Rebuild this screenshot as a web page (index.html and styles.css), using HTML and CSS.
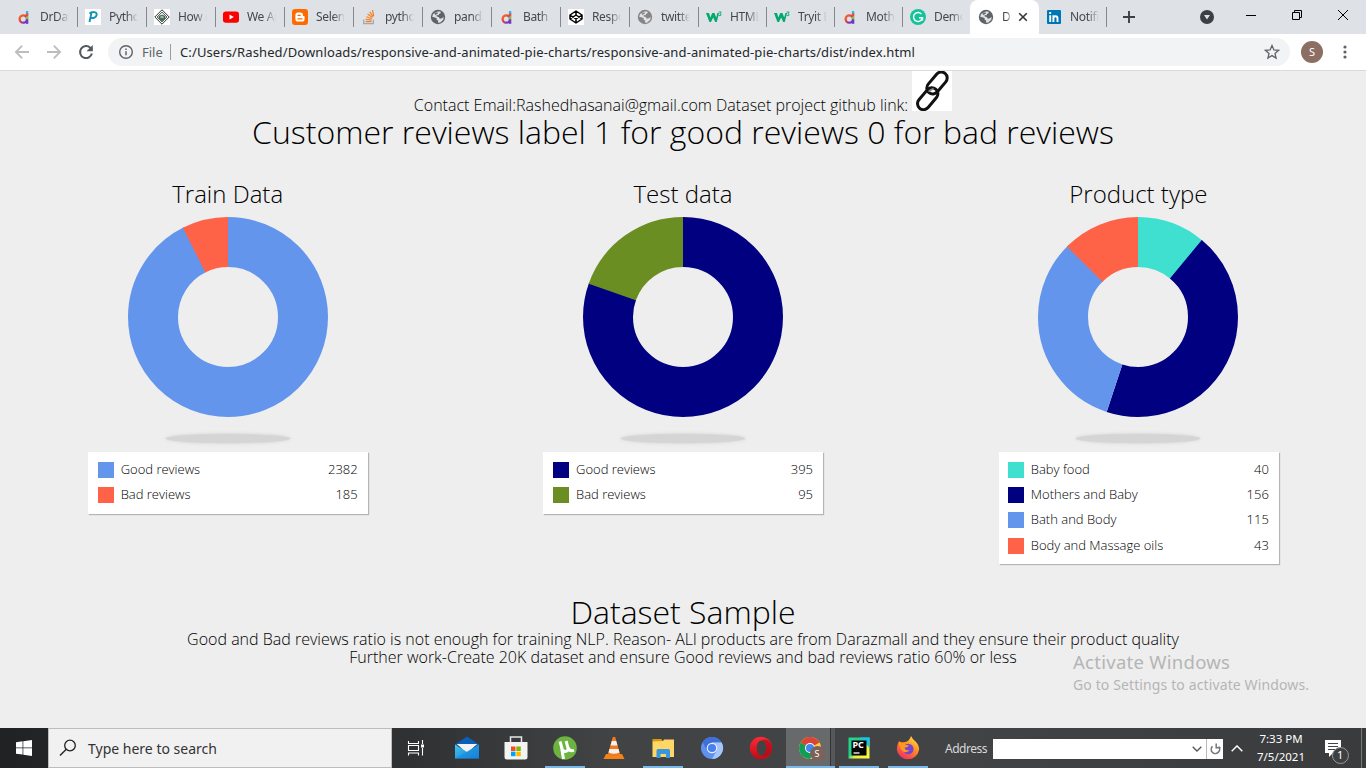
FILE: index.html
```html
<!DOCTYPE html>
<html lang="en">
<head>
<meta charset="utf-8">
<title>Customer reviews</title>
<link rel="stylesheet" href="styles.css">
</head>
<body>
<svg class="defs" width="0" height="0">
  <defs>
    <linearGradient id="ff" x1="0.8" y1="0" x2="0.2" y2="1"><stop offset="0" stop-color="#ffe14a"/><stop offset=".45" stop-color="#ff8a1e"/><stop offset="1" stop-color="#f0256c"/></linearGradient>
    <linearGradient id="op" x1="0" y1="0" x2="0" y2="1"><stop offset="0" stop-color="#ff2a35"/><stop offset="1" stop-color="#c20a16"/></linearGradient>
    <linearGradient id="pc" x1="0" y1="0" x2="1" y2="1"><stop offset="0" stop-color="#21d789"/><stop offset=".45" stop-color="#1fd08a"/><stop offset=".6" stop-color="#e6ee3a"/><stop offset="1" stop-color="#fcf84a"/></linearGradient>
    <linearGradient id="ml" x1="0" y1="0" x2="1" y2="1"><stop offset="0" stop-color="#40c8f4"/><stop offset="1" stop-color="#1578d4"/></linearGradient>
    <linearGradient id="bowl" x1="0" y1="0" x2="1" y2="1"><stop offset="0" stop-color="#f5732b"/><stop offset=".4" stop-color="#e8443c"/><stop offset=".75" stop-color="#8a35b8"/><stop offset="1" stop-color="#4a35c8"/></linearGradient>
    <symbol id="daraz" viewBox="0 0 16 16"><circle cx="7.300" cy="10" r="3.700" fill="none" stroke="url(#bowl)" stroke-width="2.300"/><path fill="#25c0ea" d="M9.900 2h2.400v3.500H9.900z"/><path fill="#f0453a" d="M9.900 4.500h2.400v3H9.900z"/><path fill="#7fc241" d="M9.900 7.500h2.400v3H9.900z"/><path fill="#6a3ac0" d="M9.900 10.500h2.400v4.300H9.900z"/></symbol>
    <symbol id="globe" viewBox="0 0 16 16"><circle cx="8" cy="8" r="7.200" fill="currentColor"/><path d="M7.800 2.600 10.300 2.400 10.800 4.100 9 5 8.600 6.300 6.800 6.100 6.500 7.300 9 8.200 9.800 9.700 12 9.300 13.600 7.800 13.300 10.800 10 13.800 7.800 13.600 8.300 11.800 6.600 10.700 6.700 9.300 4.500 8.300 2.300 8 3 5z" fill="#dee1e6"/><path d="M4.200 4.800 7.300 3.300 8 4.300 5.600 6z" fill="currentColor"/></symbol>
    <symbol id="w3" viewBox="0 0 16 16"><path d="M0 4h3l1.400 4.600L6.200 4h2.300l1.700 4.600L11.400 4h1.700l-2.300 9H9.200L7.200 8.400 5 13H3.400z" fill="#04aa6d"/><path d="M12.600 3h2.600l-1.300 1.500q1.600.3 1.100 1.600-.8 1.100-2.300.3" fill="none" stroke="#04aa6d" stroke-width=".9"/></symbol>
  </defs>
</svg>
<div class="screen">
  <header class="browser">
    <div class="tabs">
      <div class="tab"><svg class="fav"><use href="#daraz"/></svg><span class="label">DrDaw</span></div>
      <div class="tab"><svg class="fav" viewBox="0 0 16 16"><path fill="#fff" d="M0 0h16v16H0z"/><path d="M4.500 13 6.600 3.200M4.500 4.600c2-2.200 7.500-2.200 7.200 1-.3 2.800-3.700 4-5.700 3.200" fill="none" stroke="#1295b8" stroke-width="1.900"/></svg><span class="label">Python</span></div>
      <div class="tab"><svg class="fav" viewBox="0 0 16 16"><path fill="#fff" d="M0 0h16v16H0z"/><path d="M8 .8 15.200 8 8 15.200.8 8z" fill="none" stroke="#333" stroke-width="1"/><path d="M8 3 13 8l-5 5-5-5z" fill="#d5e5dc" stroke="#444" stroke-width=".8"/><path d="M5 7.300q3-2 6 0v2.500H5zM6 10l2 2 2-2" fill="#48715a" stroke="#2e5940" stroke-width=".6"/><path d="M6.500 8h3" stroke="#fff"/></svg><span class="label">How d</span></div>
      <div class="tab"><svg class="fav" viewBox="0 0 16 16"><rect y="2.500" width="16" height="11.300" rx="2.800" fill="#f00"/><path d="M6.500 5.600v5L10.800 8.100z" fill="#fff"/></svg><span class="label">We Ar</span></div>
      <div class="tab"><svg class="fav" viewBox="0 0 16 16"><rect width="16" height="16" rx="3" fill="#ff6a00"/><path d="M6 3.500h2.300A2.700 2.700 0 0 1 11 6.200q0 .9.800.9.800 0 .8.900v2a2.600 2.600 0 0 1-2.600 2.600H6A2.600 2.600 0 0 1 3.400 10V6.100A2.600 2.600 0 0 1 6 3.500z" fill="#fff"/><path d="M6 6.300h2.200M6 9.800h4" stroke="#ff6a00" stroke-width="1.300" stroke-linecap="round"/></svg><span class="label">Selenium</span></div>
      <div class="tab"><svg class="fav" viewBox="0 0 16 16"><path d="M2.700 10.500v4.200h9.600v-4.200" fill="none" stroke="#a5a8ab" stroke-width="1.300"/><path d="M4.500 12.600h6M4.700 10.300l5.900.8M5.300 7.800l5.600 1.900M6.600 5.100l4.900 3.400M8.700 2.900l3.500 4.800M11.500 1l1.200 5.900" stroke="#f48024" stroke-width="1.200"/></svg><span class="label">python</span></div>
      <div class="tab"><svg class="fav dark"><use href="#globe"/></svg><span class="label">panda</span></div>
      <div class="tab"><svg class="fav"><use href="#daraz"/></svg><span class="label">Bath &amp;</span></div>
      <div class="tab"><svg class="fav" viewBox="0 0 16 16"><rect width="16" height="16" rx="1" fill="#fff"/><path d="M8 2 14 6v4l-6 4-6-4V6zM2 6l6 4 6-4M2 10l6-4 6 4M8 2v4M8 10v4" fill="none" stroke="#000" stroke-width="1.500" stroke-linejoin="round"/></svg><span class="label">Respo</span></div>
      <div class="tab"><svg class="fav gray"><use href="#globe"/></svg><span class="label">twitter</span></div>
      <div class="tab narrow"><svg class="fav"><use href="#w3"/></svg><span class="label">HTML</span></div>
      <div class="tab narrow"><svg class="fav"><use href="#w3"/></svg><span class="label">Tryit E</span></div>
      <div class="tab narrow"><svg class="fav"><use href="#daraz"/></svg><span class="label">Mothe</span></div>
      <div class="tab narrow last"><svg class="fav" viewBox="0 0 16 16"><circle cx="8" cy="8" r="8" fill="#15c39a"/><path d="M11.400 5A4.500 4.500 0 1 0 12.500 8.700H9M12.500 8.700v2.800" fill="none" stroke="#fff" stroke-width="1.400"/></svg><span class="label">Demo</span></div>
      <div class="tab narrow active"><svg class="fav dark"><use href="#globe"/></svg><span class="label">Da</span><svg class="close" viewBox="0 0 10 10"><path d="m1.200 1.200 7.600 7.600m0-7.600L1.200 8.800" stroke="#333639" stroke-width="1.600"/></svg></div>
      <div class="tab narrow"><svg class="fav" viewBox="0 0 16 16"><rect x="1" y="1" width="14" height="14" rx="1" fill="#0077b5"/><path d="M4.200 6.300V13M4.200 3v1.900M7.400 6.300V13M7.400 9.500q0-2.300 2.100-2.300 2 0 2 2.300V13" fill="none" stroke="#fff" stroke-width="1.900"/></svg><span class="label">Notific</span></div>
      <svg class="plus" viewBox="0 0 12 12"><path d="M6 0v12M0 6h12" stroke="#3c4043" stroke-width="1.900"/></svg>
      <div class="window">
        <svg width="14" height="14" viewBox="0 0 14 14"><circle cx="7" cy="7" r="7" fill="#3c4043"/><path d="M4 5h6L7 9.500z" fill="#dee1e6"/></svg>
        <svg class="min" width="10" height="10"><path d="M0 5.500h10" stroke="#000"/></svg>
        <svg class="max" width="10" height="10"><path d="M.5 2.500h7v7h-7zM2.500 2V.5h7v7H8" fill="none" stroke="#000"/></svg>
        <svg class="quit" width="10" height="10"><path d="m0 0 10 10m0-10L0 10" stroke="#000"/></svg>
      </div>
    </div>
    <div class="toolbar">
      <svg class="nav" viewBox="0 0 16 16"><path d="M15 8H2.300M8.200 1.700 1.900 8l6.300 6.300" fill="none" stroke="#bbbdbf" stroke-width="1.800"/></svg>
      <svg class="nav" viewBox="0 0 16 16"><path d="M1 8h12.700M7.800 1.700 14.100 8l-6.300 6.300" fill="none" stroke="#bbbdbf" stroke-width="1.800"/></svg>
      <svg class="nav" viewBox="0 0 16 16"><path d="M13.900 9.600A6 6 0 1 1 12.300 3.800L14 5.400" fill="none" stroke="#55585c" stroke-width="2"/><path d="M14.800.900v6.300H8.500z" fill="#55585c"/></svg>
      <div class="omnibox">
        <svg width="16" height="16" viewBox="0 0 16 16"><circle cx="8" cy="8" r="6.300" fill="none" stroke="#5f6368" stroke-width="1.400"/><path d="M8 7.200v4M8 4.500v1.400" stroke="#5f6368" stroke-width="1.500"/></svg>
        <span class="scheme">File</span><span class="bar"></span>
        <span class="url">C:/Users/Rashed/Downloads/responsive-and-animated-pie-charts/responsive-and-animated-pie-charts/dist/index.html</span>
        <svg class="star" width="16" height="16" viewBox="0 0 16 16"><path d="m8 1.500 1.900 4.400 4.700.4-3.600 3.100 1.100 4.700L8 11.600l-4.100 2.500L5 9.400 1.400 6.300l4.700-.4z" fill="none" stroke="#5f6368" stroke-width="1.300"/></svg>
      </div>
      <span class="avatar">S</span>
      <svg class="more" width="4" height="14"><circle cx="2" cy="2" r="1.600"/><circle cx="2" cy="7" r="1.600"/><circle cx="2" cy="12" r="1.600"/></svg>
    </div>
  </header>

  <main class="page">
    <div class="contact"><span class="contact-text">Contact Email:Rashedhasanai@gmail.com Dataset project github link:</span>
      <svg class="chain" viewBox="0 0 40 40"><path fill="#fff" d="M0 0h40v40H0z"/><g fill="none" stroke="#111" stroke-width="3"><rect x="-6" y="-12.500" width="12" height="25" rx="6" transform="translate(25 12) rotate(40)"/><rect x="-6" y="-12.500" width="12" height="25" rx="6" transform="translate(15.700 27.700) rotate(40)"/></g><path d="m16.500 20.500 5-3" stroke="#888" stroke-width="1.500"/></svg>
    </div>
    <h1 class="title">Customer reviews label 1 for good reviews 0 for bad reviews</h1>
    <div class="charts">
      <section class="chart">
        <h2>Train Data</h2>
        <svg class="donut" viewBox="0 0 200 200"><g transform="rotate(-90 100 100)"><circle class="blue" cx="100" cy="100" r="75" pathLength="2567" stroke-dasharray="2382 2567"/><circle class="red" cx="100" cy="100" r="75" pathLength="2567" stroke-dasharray="192 2567" stroke-dashoffset="-2375"/></g></svg>
        <div class="shade"></div>
        <ul class="legend"><li><i class="sw blue"></i>Good reviews<b>2382</b></li><li><i class="sw red"></i>Bad reviews<b>185</b></li></ul>
      </section>
      <section class="chart">
        <h2>Test data</h2>
        <svg class="donut" viewBox="0 0 200 200"><g transform="rotate(-90 100 100)"><circle class="navy" cx="100" cy="100" r="75" pathLength="490" stroke-dasharray="395 490"/><circle class="olive" cx="100" cy="100" r="75" pathLength="490" stroke-dasharray="96 490" stroke-dashoffset="-394"/></g></svg>
        <div class="shade"></div>
        <ul class="legend"><li><i class="sw navy"></i>Good reviews<b>395</b></li><li><i class="sw olive"></i>Bad reviews<b>95</b></li></ul>
      </section>
      <section class="chart">
        <h2>Product type</h2>
        <svg class="donut" viewBox="0 0 200 200"><g transform="rotate(-90 100 100)"><circle class="teal" cx="100" cy="100" r="75" pathLength="354" stroke-dasharray="40 354"/><circle class="navy" cx="100" cy="100" r="75" pathLength="354" stroke-dasharray="156 354" stroke-dashoffset="-39"/><circle class="blue" cx="100" cy="100" r="75" pathLength="354" stroke-dasharray="116 354" stroke-dashoffset="-195"/><circle class="red" cx="100" cy="100" r="75" pathLength="354" stroke-dasharray="44.500 354" stroke-dashoffset="-309.500"/></g></svg>
        <div class="shade"></div>
        <ul class="legend shifted"><li><i class="sw teal"></i>Baby food<b>40</b></li><li><i class="sw navy"></i>Mothers and Baby<b>156</b></li><li><i class="sw blue"></i>Bath and Body<b>115</b></li><li><i class="sw red"></i>Body and Massage oils<b>43</b></li></ul>
      </section>
    </div>
    <h1 class="sample">Dataset Sample</h1>
    <p class="note">Good and Bad reviews ratio is not enough for training NLP. Reason- ALl products are from Darazmall and they ensure their product quality</p>
    <p class="note">Further work-Create 20K dataset and ensure Good reviews and bad reviews ratio 60% or less</p>
    <div class="activate"><div class="big">Activate Windows</div><div class="small">Go to Settings to activate Windows.</div></div>
  </main>

  <footer class="taskbar">
    <div class="start"><svg width="16" height="16" viewBox="0 0 16 16"><path d="M0 2.200 6.600 1.300v6.200H0zM7.300 1.200 16 0v7.500H7.300zM0 8.300h6.600v6.300L0 13.700zM7.300 8.300H16V16l-8.700-1.200z" fill="#fff"/></svg></div>
    <div class="search"><svg width="18" height="18" viewBox="0 0 18 18"><circle cx="11" cy="6.500" r="5.300" fill="none" stroke="#222" stroke-width="1.300"/><path d="M7.300 10.300 1 16.600" stroke="#222" stroke-width="1.400"/></svg><span>Type here to search</span></div>
    <div class="apps">
      <div class="app view"><svg width="18" height="16" viewBox="0 0 18 16"><path d="M1.500 1v2.500h10V1M1.500 15.500V13h10v2.500M1.500 5.500h10v5h-10zM15.500 0v4M15.500 8v7.500" fill="none" stroke="#fff" stroke-width="1.100"/><path fill="#fff" d="M14 4.500h3v3h-3z"/></svg></div>
      <div class="app"><svg viewBox="0 0 24 24"><path d="M0 8.500 12 .5l12 8V10H0z" fill="#0c5fb8"/><path d="M2 8h20L12 17.500z" fill="#f3f3f3"/><path d="M0 8.500 12 16l12-7.500v14H0z" fill="url(#ml)"/><path d="M2 8h20L12 15z" fill="#f3f3f3"/><path d="M0 22.500 24 8.500v14z" fill="#1688de" opacity=".55"/></svg></div>
      <div class="app"><svg viewBox="0 0 24 24"><path d="M6.500 7V1h11v6" fill="none" stroke="#e8e8e8" stroke-width="1.500"/><path fill="#f3f3f3" d="M.5 6h23v15q0 2.500-2.500 2.500H3Q.5 23.500.5 21z"/><path fill="#f25022" d="M7 10.500h4.500V15H7z"/><path fill="#7fba00" d="M12.300 10.500h4.500V15h-4.500z"/><path fill="#00a4ef" d="M7 15.700h4.500v4.500H7z"/><path fill="#ffb900" d="M12.300 15.700h4.500v4.500h-4.500z"/></svg></div>
      <div class="app run"><svg viewBox="0 0 24 24"><circle cx="12" cy="12" r="11.800" fill="#6cb33f"/><path d="M7 5.500 9.200 13q1 3 3.700 2.400 2.700-.8 2-3.600L13.100 5M14.900 11.500q1.300 4.200 6.100 2.900M8.200 9.500 10.500 23" fill="none" stroke="#fff" stroke-width="3"/></svg></div>
      <div class="app"><svg viewBox="0 0 24 24"><path d="M4 18h16l2.500 5h-21z" fill="#f58216"/><path d="M10.800 1h2.400l5 17.500q-6 3-12.400 0z" fill="#f4791c"/><path d="M9.800 5h4.400l1.300 4.400h-7zM7.500 13h9l1 3.500q-5.500 2.500-11 0z" fill="#f2f2f2"/></svg></div>
      <div class="app run"><svg viewBox="0 0 24 24"><path d="M1.500 3h9l1.500 3H1.500z" fill="#d99a10"/><path d="M1.500 5.500 12 5l1-1.500h10V21H1.500z" fill="#ffd766"/><path d="M5.500 22v-7.500q0-1.500 1.500-1.500h10.500q1.500 0 1.500 1.500V22h-4v-4H9.500v4z" fill="#3a96dd"/></svg></div>
      <div class="app"><svg viewBox="0 0 24 24"><circle cx="12" cy="12" r="11" fill="#5f92f0"/><path d="M12 6.500h9.600A11 11 0 0 0 2.600 6.300L7 14z" fill="#3f6fd8"/><path d="M12 23a11 11 0 0 0 9.600-16.500H12L17 14z" fill="#a6c5fa"/><circle cx="12" cy="12" r="5.300" fill="#e7effe"/><circle cx="12" cy="12" r="4.100" fill="#4a80ea"/></svg></div>
      <div class="app"><svg viewBox="0 0 24 24"><path d="M12 .8a11.200 11.200 0 1 0 0 22.400A11.200 11.200 0 1 0 12 .8zM12.500 4.500c3 0 4.700 3.300 4.700 7.500s-1.700 7.500-4.700 7.500S7.800 16.200 7.800 12s1.700-7.500 4.700-7.500z" fill="url(#op)" fill-rule="evenodd"/><path d="M12.500 4.500c3-2.500 10.500-.2 10.700 7.500-.2 7.700-7.700 10-10.700 7.500 3 0 4.700-3.300 4.700-7.500s-1.700-7.500-4.700-7.500z" fill="#a70c14" opacity=".65"/></svg></div>
      <div class="app run chrome"><svg viewBox="0 0 24 24"><circle cx="12" cy="12" r="11" fill="#ffcd40"/><path d="M12 12 2.500 6.500a11 11 0 0 1 19 0z" fill="#db4437"/><path d="M12 12 2.500 6.500A11 11 0 0 0 12 23l4-7z" fill="#0f9d58"/><circle cx="12" cy="12" r="5" fill="#fff"/><circle cx="12" cy="12" r="4" fill="#4285f4"/></svg><span class="badge">S</span></div>
      <div class="app run"><svg viewBox="0 0 24 24"><path fill="url(#pc)" d="M1.500 1.500h21v21h-21z"/><path fill="#16c4f0" d="M13 1.500h9.500V12z"/><path fill="#050505" d="M4.500 4.500h15v15h-15z"/><path d="M6.500 17h6" stroke="#fff" stroke-width="1.300"/></svg><span class="pc">PC</span></div>
      <div class="app run"><svg viewBox="0 0 24 24"><path d="M3 5q1 1.300 3 1.500 1.500-.7 3.500-.5Q13.500 5 15 0q1.500 3 4 5 4.500 4 4 9a11.200 11 0 0 1-22.200-.5Q.8 9 3 5z" fill="url(#ff)"/><circle cx="12.300" cy="13" r="5.300" fill="#7545cf"/><path d="M3 6q4 0 7 3l3 .5q-1 2.500-4.500 2 1 3.500 5 2.700-3 3.500-7 .8-3.500-3-3.500-9z" fill="#ff9820"/></svg></div>
    </div>
    <span class="address">Address</span>
    <div class="field"><svg width="10" height="6"><path d="m.7.700 4.300 4.300L9.300.7" fill="none" stroke="#555" stroke-width="1.300"/></svg><span class="go"><svg width="11" height="12" viewBox="0 0 11 12"><path d="M2.500 3.300A4.200 4.200 0 1 0 8.600 3.600" fill="none" stroke="#777" stroke-width="1.600"/><path d="M6.200.6v4.200H10.500" fill="none" stroke="#777" stroke-width="1.500"/></svg></span></div>
    <svg class="up" width="12" height="7"><path d="m.7 6.200 5.300-5.300 5.300 5.300" fill="none" stroke="#fff" stroke-width="1.400"/></svg>
    <div class="clock"><span>7:33 PM</span><span>7/5/2021</span></div>
    <div class="notify"><svg width="24" height="24" viewBox="0 0 24 24"><path d="M0 0h16v13H8l-4 4v-4H0z" fill="#fff"/><path d="M3 3.500h10M3 6.500h10M3 9.500h7" stroke="#444"/><circle cx="15.500" cy="15.500" r="8" fill="#3d3f41" stroke="#9a9a9a"/></svg><span>1</span></div>
    <div class="edge"></div>
  </footer>
</div>
</body>
</html>
```
FILE: styles.css
```css
* { box-sizing: border-box; }
body { margin: 0; overflow: hidden; font-family: "Open Sans", sans-serif; }
.defs { position: absolute; }
.screen { width: 1366px; height: 768px; display: flex; flex-direction: column; background: #eee; }

.browser { height: 71px; border-bottom: 1px solid #d8dadd; background: #fff; font-family: "Noto Sans", sans-serif; }
.tabs { height: 34px; background: #dee1e6; display: flex; align-items: center; padding-left: 9px; }
.tab { width: 69px; height: 34px; flex: none; display: flex; align-items: center; padding-left: 7px; background: linear-gradient(#85888c, #85888c) right 7px / 1px 20px no-repeat; }
.tab.narrow { width: 68px; }
.tab.last { background: none; }
.tab.active { width: 69px; margin-left: -1px; padding-left: 8px; background: #fff; border-radius: 8px 8px 0 0; }
.fav { width: 16px; height: 16px; flex: none; }
.fav.dark { color: #5f6368; }
.fav.gray { color: #858585; }
.label { width: 29px; margin-left: 8px; overflow: hidden; white-space: nowrap; font-size: 12px; line-height: 18px; letter-spacing: -.35px; color: #45484c; -webkit-mask-image: linear-gradient(90deg, #000 60%, transparent); mask-image: linear-gradient(90deg, #000 60%, transparent); }
.active .label { width: 9px; }
.close { width: 10px; height: 10px; margin-left: 7px; }
.plus { width: 12px; height: 12px; margin-left: 16px; }
.window { flex: 1; display: flex; align-items: center; margin-left: 65px; }
.min { margin: -5px 0 0 32px; }
.max { margin: -5px 0 0 36px; }
.quit { margin: -5px 0 0 36px; }
.toolbar { height: 36px; display: flex; align-items: center; padding-left: 14px; }
.nav { width: 16px; height: 16px; margin-right: 16px; }
.omnibox { width: 1182px; height: 28px; margin-left: -2px; border-radius: 14px; background: #f1f3f4; display: flex; align-items: center; padding: 0 10px; font-size: 13px; white-space: nowrap; }
.scheme { margin-left: 8px; color: #5f6368; width: 21px; }
.bar { width: 1px; height: 16px; background: #9a9da1; margin: 0 9px 0 7px; }
.url { color: #25272b; letter-spacing: .115px; }
.star { margin-left: auto; }
.avatar { width: 22px; height: 22px; margin-left: 11px; border-radius: 50%; background: #8d6e63; color: #fff; font-size: 11px; line-height: 22px; text-align: center; }
.more { margin-left: 20px; fill: #5f6368; }

.page { height: 657px; position: relative; color: #000; font-weight: 300; }
.contact { height: 40px; display: flex; justify-content: center; align-items: flex-end; font-size: 16px; line-height: 18px; }
.contact-text { position: relative; top: 3px; }
.chain { width: 40px; height: 40px; margin-left: 4px; }
.page h1, .page h2 { margin: 0; font-weight: 300; text-align: center; }
.page h1 { font-size: 32px; line-height: 42px; height: 44px; }
.charts { height: 436px; display: grid; grid-template-columns: repeat(3, 1fr); padding-top: 23px; }
.chart { display: flex; flex-direction: column; align-items: center; }
.page h2 { font-size: 24px; line-height: 32px; height: 39px; }
.donut { width: 200px; height: 200px; flex: none; }
.donut circle { fill: none; stroke-width: 50; }
.blue { stroke: #6495ed; background: #6495ed; }
.red { stroke: #ff6347; background: #ff6347; }
.navy { stroke: #000080; background: #000080; }
.olive { stroke: #6b8e23; background: #6b8e23; }
.teal { stroke: #40e0d0; background: #40e0d0; }
.shade { width: 124px; height: 9px; flex: none; margin: 17px 0 9px; border-radius: 50%; background: #d5d5d5; box-shadow: 0 0 3px 1px #d9d9d9; }
.legend { width: 280px; margin: 0; padding: 4px 10px 7px; list-style: none; background: #fff; box-shadow: 1px 1px 1px #b4b4b4; font-size: 13px; }
.legend.shifted { padding-left: 9px; margin-left: 1px; }
.legend li { height: 25.3px; display: flex; align-items: center; }
.legend b { margin-left: auto; font-weight: 300; }
.sw { width: 16px; height: 16px; margin: 2px 7px 0 0; }
.page .sample { height: 39px; }
.note { margin: 0; height: 18px; line-height: 18px; font-size: 16px; text-align: center; white-space: nowrap; }
.activate { position: absolute; left: 1073px; top: 578px; color: #b5b5b5; font-family: "Noto Sans", sans-serif; font-weight: 400; white-space: nowrap; }
.big { font-size: 18.5px; line-height: 26px; letter-spacing: .27px; }
.small { font-size: 14px; line-height: 20px; letter-spacing: .12px; }

.taskbar { height: 40px; display: flex; align-items: center; background: linear-gradient(90deg, #202224, #2f3132 30%, #414345 45%, #414345 70%, #393b3d); color: #fff; font-family: "Noto Sans", sans-serif; }
.start { width: 48px; display: flex; justify-content: center; }
.search { width: 344px; height: 40px; display: flex; align-items: center; gap: 11px; padding-left: 10px; background: #f1f1f1; border: 1px solid #bdbdbd; color: #333; font-size: 14px; }
.apps { display: flex; width: 541px; padding-left: 1.5px; }
.app { position: relative; width: 49px; height: 40px; display: flex; align-items: center; justify-content: center; }
.app.view { padding-right: 4px; }
.app > svg:not([width]) { width: 24px; height: 24px; }
.run { background: linear-gradient(#76b9ed, #76b9ed) center bottom / 40px 2px no-repeat; }
.chrome { background: linear-gradient(#76b9ed, #76b9ed) left bottom / 100% 2px no-repeat, linear-gradient(90deg, #67696a 44px, #333 44px, #333 45px, #55585a 45px); }
.badge { position: absolute; left: 24px; top: 18px; width: 15px; height: 15px; border-radius: 50%; background: #7d6259; font-size: 9px; line-height: 15px; text-align: center; }
.pc { position: absolute; left: 18px; top: 11px; font-size: 9px; line-height: 12px; font-weight: 700; }
.address { width: 48px; margin-left: 12px; font-size: 12px; letter-spacing: -.5px; color: #d8d8d8; }
.field { width: 230px; height: 20px; margin-top: 2px; background: #fff; display: flex; align-items: center; justify-content: flex-end; }
.go { width: 17px; height: 20px; margin-left: 4px; border-left: 1px solid #bbb; display: flex; align-items: center; justify-content: center; }
.up { margin-left: 8px; }
.clock { width: 76px; display: flex; flex-direction: column; align-items: center; font-size: 11.5px; line-height: 18px; margin-top: -1px; }
.notify { position: relative; width: 24px; height: 24px; margin: 8px 0 0 6px; }
.notify span { position: absolute; left: 12px; top: 7px; font-size: 11px; line-height: 16px; }
.edge { width: 1px; height: 40px; margin-left: 12px; background: #777; }
```
